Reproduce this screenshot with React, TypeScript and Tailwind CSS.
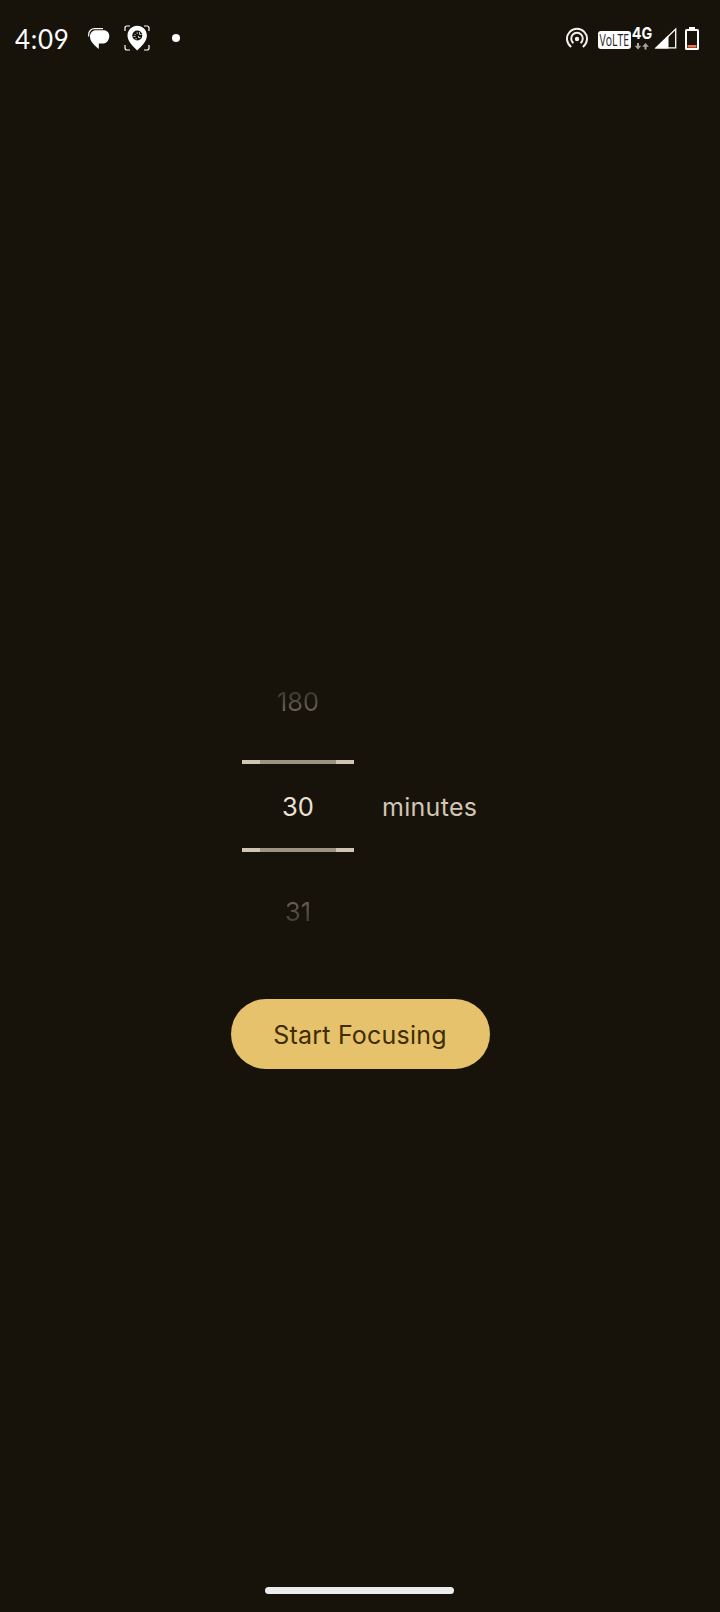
import type { ReactNode } from "react";

function StatusBar() {
  return (
    <header className="flex h-[76px] shrink-0 items-center pl-[15px] pr-[21px] text-white">
      <span className="w-[73px] whitespace-nowrap pt-[2px] font-['Lato',sans-serif] text-[26px] leading-8 tracking-[0.7px]">4:09</span>
      <svg className="h-[22px] w-[22px]" viewBox="0 0 22 22" fill="#fff">
        <path d="M.7 9.500V7.500C.7 4 3.500 1.700 6.500 1.700H15" fill="none" stroke="#fff" strokeWidth="1.200" />
        <path d="M8 3.200h7.500c3.600 0 5.800 2.500 5.800 5.900s-2.300 7.400-5.800 7.400H10.800V22C8 20 5.200 17 3.600 14.800 2.600 13.200 2 11.500 2 9.500 2 5.700 4.500 3.200 8 3.200z" />
      </svg>
      <svg className="ml-[14px] h-[26px] w-[26px]" viewBox="0 0 26 26" fill="none">
        <path d="M1 6V3q0-2 2-2h3M20 1h3q2 0 2 2v3M25 20v3q0 2-2 2h-3M6 25H3q-2 0-2-2v-3" stroke="#fff" strokeWidth="1.200" />
        <path d="M13.300.8C8 .8 3.500 5 3.500 10.600c0 6.200 6.200 11.500 9.700 15 3.600-3.500 9.700-8.800 9.700-15C22.900 5 18.500.8 13.300.8z" fill="#fff" />
        <circle cx="13.300" cy="10.500" r="5" fill="#17130b" />
        <path d="M9.500 11.500h2M12.500 8h1.500M15.500 7v2.500h2M12 13v1.500M14.500 11v1.500h2M11 9v1" stroke="#ccc" strokeWidth="1" />
      </svg>
      <span className="ml-[22px] size-2 rounded-full bg-white" />

      <div className="ml-auto flex items-center">
        <svg className="h-[22px] w-[22px]" viewBox="0 0 22 22" fill="none" stroke="#f2f0ec" strokeWidth="2">
          <path d="M5.200 20A10 10 0 1 1 16.800 20" />
          <path d="M7.500 16.100A5.800 5.800 0 1 1 14.500 16.100" />
          <circle cx="11" cy="12" r="2.200" fill="#f2f0ec" stroke="none" />
        </svg>
        <svg className="ml-[10px] mt-[4px] h-[18px] w-[33px] overflow-visible" viewBox="0 0 33 18">
          <rect width="33" height="18" rx="3" fill="#fff" />
          <text x="1.500" y="15" textLength="29.500" lengthAdjust="spacingAndGlyphs" fontSize="16" fontFamily="Open Sans" fill="#222">VoLTE</text>
        </svg>
        <svg className="h-[24px] w-[22px] overflow-visible" viewBox="0 0 22 24">
          <text x=".8" y="13.300" textLength="20.400" lengthAdjust="spacingAndGlyphs" fontSize="16.500" fontWeight="700" fontFamily="Inter" fill="#fff">4G</text>
          <path d="M6 17h2v2.800h2.300L7 23.500 3.700 19.800H6zM13.500 23.500v-2.800h-2.300L14.500 17l3.300 3.700h-2.300v2.800z" fill="#aaa69f" />
        </svg>
        <svg className="ml-[1px] h-[22px] w-[23px]" viewBox="0 0 23 22">
          <path d="M2.500 20.900H21.700V2z" fill="none" stroke="#fff" strokeWidth="1.300" />
          <path d="M.5 21.600L14.500 8v13.600z" fill="#fff" />
        </svg>
        <svg className="ml-[8px] h-[23px] w-[14px]" viewBox="0 0 14 23">
          <path d="M4 0h6v3H4z" fill="#fff" />
          <rect x="1" y="3" width="12" height="19" rx=".5" fill="none" stroke="#fff" strokeWidth="2" />
          <path d="M2.500 18h9v2.600h-9z" fill="#f0714d" />
        </svg>
      </div>
    </header>
  );
}

function PickerLine() {
  return (
    <div className="flex h-1 w-[112px] bg-[#9d9382]">
      <span className="w-[18px] bg-[#d1c5b4]" />
      <span className="ml-auto w-[18px] bg-[#d1c5b4]" />
    </div>
  );
}

function FadedValue({ children, className }: { children: ReactNode; className: string }) {
  return (
    <span className={`bg-clip-text leading-8 text-transparent ${className}`}>{children}</span>
  );
}

export default function App() {
  return (
    <div className="flex h-[1612px] w-[720px] flex-col bg-[#17130b] font-['Inter',sans-serif] text-[25.500px]">
      <StatusBar />
      <main className="flex flex-1 flex-col items-center pt-[610px]">
        <div className="flex w-[236px] items-center">
          <div className="flex w-[112px] flex-col items-center">
            <FadedValue className="bg-linear-to-b from-[#3d382f] from-20% to-[#69635a] to-80%">180</FadedValue>
            <div className="mt-[42px]"><PickerLine /></div>
            <span className="mt-[27px] mb-[25px] leading-8 text-[#ebe1d4]">30</span>
            <PickerLine />
            <FadedValue className="mt-[44px] bg-linear-to-b from-[#645d53] from-20% to-[#3d382f] to-90%">31</FadedValue>
          </div>
          <span className="ml-[28px] text-[25px] font-[370] leading-8 tracking-[0.3px] text-[#d1c5b4]">minutes</span>
        </div>
        <button className="mt-[71px] flex h-[70px] w-[259px] items-center justify-center rounded-full bg-[#e6c26c] pt-[4px] text-[25px] font-[370] tracking-[0.2px] text-[#402d00]">
          Start Focusing
        </button>
      </main>
      <footer className="flex h-[25px] shrink-0 justify-center">
        <div className="mr-[2px] h-[7px] w-[189px] rounded-full bg-[#ececec]" />
      </footer>
    </div>
  );
}
